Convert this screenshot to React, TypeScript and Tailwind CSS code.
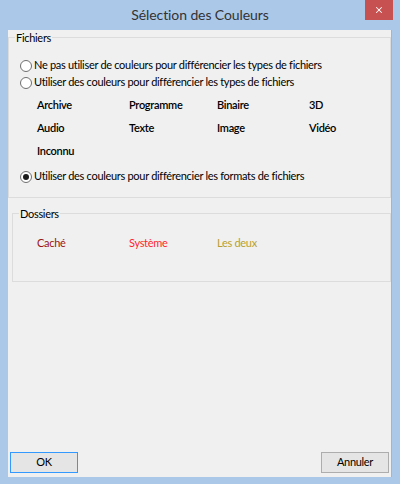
import { X } from 'lucide-react';

type RadioProps = {
  label: string;
  checked?: boolean;
};

const Radio = ({ label, checked = false }: RadioProps) => {
  return (
    <div className="flex items-center h-[17px]">
      <span className="w-[12px] h-[12px] shrink-0 rounded-full border border-[#6f6f6f] bg-white flex items-center justify-center">
        {checked && <span className="w-[6px] h-[6px] rounded-full bg-[#1b1b1b]" />}
      </span>
      <span className="ml-[2px] whitespace-nowrap">{label}</span>
    </div>
  );
};

const fileTypes = [
  ['Archive', 'Programme', 'Binaire', '3D'],
  ['Audio', 'Texte', 'Image', 'Vidéo'],
  ['Inconnu'],
];

const folderTypes = [
  { label: 'Caché', color: 'text-[#9a1414]' },
  { label: 'Système', color: 'text-[#ff1f2f]' },
  { label: 'Les deux', color: 'text-[#b8a030]' },
];

const App = () => {
  return (
    <div
      className="w-[400px] h-[484px] bg-[#abc8e9] flex flex-col text-[11px] tracking-[-0.3px] text-black"
      style={{ fontFamily: 'Lato, "Liberation Sans", sans-serif' }}
    >
      <div className="h-[30px] relative flex items-center justify-center">
        <span className="text-[14px] tracking-[-0.1px] text-[#333] -mt-[1px]">Sélection des Couleurs</span>
        <button className="absolute right-[7px] top-0 w-[28px] h-[20px] bg-[#c75050] flex items-center justify-center">
          <X size={10} strokeWidth={2.5} color="white" />
        </button>
      </div>
      <div className="mx-[8px] h-[447px] bg-[#f0f0f0] border-r border-[#9fb6d3] flex flex-col">
        <fieldset className="border border-[#dcdcdc] h-[168px]">
          <legend className="ml-[6px] px-[1px] leading-[15px]">Fichiers</legend>
          <div className="pl-[11px] pt-[12px]">
            <Radio label="Ne pas utiliser de couleurs pour différencier les types de fichiers" />
            <Radio label="Utiliser des couleurs pour différencier les types de fichiers" />
            <div className="pl-[17px] pt-[6px] font-semibold flex flex-col gap-[8px]">
              {fileTypes.map((row, i) => (
                <div key={i} className="grid grid-cols-[92px_88px_92px_60px] h-[15px] leading-[15px]">
                  {row.map((t) => (
                    <span key={t}>{t}</span>
                  ))}
                </div>
              ))}
            </div>
            <div className="pt-[10px]">
              <Radio label="Utiliser des couleurs pour différencier les formats de fichiers" checked />
            </div>
          </div>
        </fieldset>
        <fieldset className="border border-[#dcdcdc] ml-[4px] mt-[8px] h-[76px]">
          <legend className="ml-[6px] px-[1px] leading-[15px]">Dossiers</legend>
          <div className="grid grid-cols-[92px_88px_92px] pl-[24px] pt-[14px] leading-[15px]">
            {folderTypes.map((f) => (
              <span key={f.label} className={f.color}>
                {f.label}
              </span>
            ))}
          </div>
        </fieldset>
        <div className="mt-auto flex justify-between px-[2px] pb-[4px]">
          <button className="w-[68px] h-[21px] border border-[#3399ff] bg-[#e5e5e5]">OK</button>
          <button className="w-[68px] h-[21px] border border-[#adadad] bg-[#e5e5e5]">Annuler</button>
        </div>
      </div>
      <div className="flex-1" />
    </div>
  );
};

export default App;
